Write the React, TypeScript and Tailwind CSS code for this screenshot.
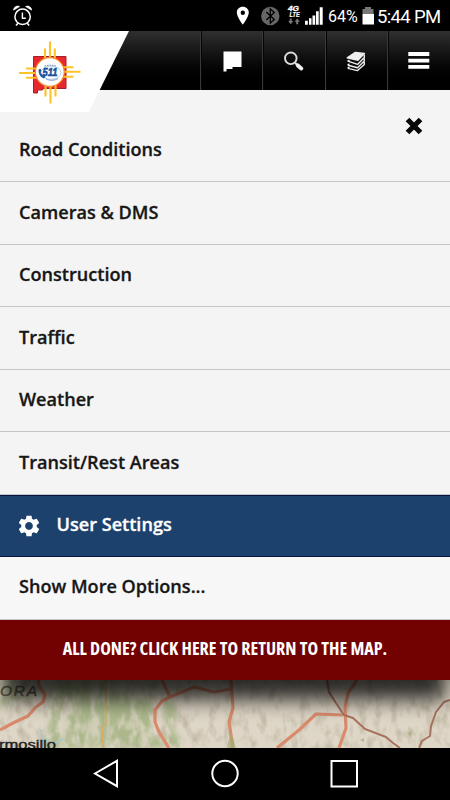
import React from "react";

const MENU_TOP = ["Cameras & DMS", "Construction", "Traffic", "Weather", "Transit/Rest Areas"];

function AlarmIcon() {
  return (
    <svg width="20" height="22" viewBox="0 0 20 22" fill="none" stroke="#fff">
      <circle cx="9.6" cy="11.8" r="7.7" strokeWidth="1.5" />
      <path d="M9.4 7.6v5.6h3.4" strokeWidth="1.4" />
      <path d="M5 18.3l-2 2.2M14.2 18.3l2 2.2" strokeWidth="1.6" />
      <path d="M.6 5.2C.4 2.4 4 0 6.6 1.6ZM18.6 5.2c.2-2.8-3.4-5.2-6-3.6Z" fill="#fff" strokeWidth=".6" />
    </svg>
  );
}

function StatusIcons() {
  return (
    <svg width="90" height="30" viewBox="235 0 90 30" fill="none">
      <path d="M242.8 6.8c-3.5 0-6 2.5-6 5.8 0 4.2 6 12.2 6 12.2s6-8 6-12.2c0-3.3-2.5-5.8-6-5.8Zm0 3.7a2.2 2.2 0 1 1 0 4.4 2.2 2.2 0 0 1 0-4.4Z" fill="#fff" fillRule="evenodd" />
      <circle cx="270.3" cy="16" r="9.2" fill="#666" />
      <path d="M266.3 12l8 7.5-4 3.5V9l4 3.5-8 7.5" stroke="#000" strokeWidth="1.3" />
      <text x="287.9" y="11" fill="#fff" fontFamily="Liberation Sans, sans-serif" fontSize="8" fontWeight="700" fontStyle="italic" stroke="#fff" strokeWidth=".3" textLength="11" lengthAdjust="spacingAndGlyphs">4G</text>
      <text x="289.6" y="17.4" fill="#fff" fontFamily="Liberation Sans, sans-serif" fontSize="6.5" fontWeight="700" fontStyle="italic" stroke="#fff" strokeWidth=".2" textLength="10" lengthAdjust="spacingAndGlyphs">LTE</text>
      <path d="M289.7 18.6h2v2.5h1.6l-2.6 3.2-2.6-3.2h1.6ZM296.2 24.3v-2.6h-1.6l2.6-3.2 2.6 3.2h-1.6v2.6Z" fill="#777" />
      <path d="M305 20.7h2.8v4H305zM309 18.3h2.5v6.4H309zM312.5 15.4h2.7v9.3h-2.7zM316 11.3h2.7v13.4H316zM319.7 7.2h3v17.5h-3z" fill="#fff" />
    </svg>
  );
}

function Logo() {
  return (
    <svg className="relative block" width="130" height="82" viewBox="0 30 130 82">
      <path d="M0 31H129L88.5 112.5H0Z" fill="#fff" />
      <path d="M33.5 56.5H66V88.5H43l-.5 1.5h-5v3h-4Z" fill="#e7282c" stroke="#a51f28" strokeWidth="1" />
      <path d="M50 41.5v20M45 48.5v12M54.8 48.5v12M50.5 85v18.5M45.5 85v11.5M55.5 85v11.5M19 73h18M26 68.5h12M26 77.8h12M62 71.8h18.5M62 67.3h11.5M62 76.8h11.5" stroke="#fdc42a" strokeWidth="2.1" />
      <circle cx="49.8" cy="72" r="14.4" fill="#fff" stroke="#f88a2c" strokeWidth="1.2" />
      <ellipse cx="51" cy="72.7" rx="10" ry="6.6" fill="none" stroke="#b8cbe0" strokeWidth="1" />
      <path d="M46 79c4 2 9 1.5 12-.4" fill="none" stroke="#7b9cc6" strokeWidth="1" />
      <path d="M44.5 66.2c4-1.4 8-1.4 12 0" fill="none" stroke="#4e7db5" strokeWidth=".9" strokeDasharray="1.5 1" />
      <path d="M38.6 69.5l1.8-.8 1 1.5-.7 1.8c.3 1.6 1 2.7 2.3 3.4l1.7-.2.6 2-1.5 1.2c-3.6-1.3-5.5-4.6-5.2-8.9Z" fill="#1b5aa6" />
      <text x="42.5" y="76" fill="#174f9c" fontFamily="Liberation Sans, sans-serif" fontSize="10" fontWeight="700" fontStyle="italic" stroke="#174f9c" strokeWidth=".5" textLength="15" lengthAdjust="spacingAndGlyphs">511</text>
    </svg>
  );
}

function NavCell({ children }: { children: React.ReactNode }) {
  return <div className="flex h-full w-[62.3px] border-l border-[#393939] shadow-[inset_1px_0_0_#050505]">{children}</div>;
}

function GearIcon() {
  return (
    <svg width="22" height="22" viewBox="1.8 1.8 20.4 20.4" fill="#fff">
      <path d="M19.14 12.94c.04-.3.06-.61.06-.94 0-.32-.02-.64-.07-.94l2.03-1.58c.18-.14.23-.41.12-.61l-1.92-3.32c-.12-.22-.37-.29-.59-.22l-2.39.96c-.5-.38-1.03-.7-1.62-.94l-.36-2.54c-.04-.24-.24-.41-.48-.41h-3.84c-.24 0-.43.17-.47.41l-.36 2.54c-.59.24-1.13.57-1.62.94l-2.39-.96c-.22-.08-.47 0-.59.22L2.74 8.87c-.12.21-.08.47.12.61l2.03 1.58c-.05.3-.09.63-.09.94s.02.64.07.94l-2.03 1.58c-.18.14-.23.41-.12.61l1.92 3.32c.12.22.37.29.59.22l2.39-.96c.5.38 1.03.7 1.62.94l.36 2.54c.05.24.24.41.48.41h3.84c.24 0 .44-.17.47-.41l.36-2.54c.59-.24 1.13-.56 1.62-.94l2.39.96c.22.08.47 0 .59-.22l1.92-3.32c.12-.22.07-.47-.12-.61l-2.01-1.58zM12 15.6c-1.98 0-3.6-1.62-3.6-3.6s1.62-3.6 3.6-3.6 3.6 1.62 3.6 3.6-1.62 3.6-3.6 3.6z" />
    </svg>
  );
}

function MapView() {
  return (
    <svg className="block" width="450" height="68" viewBox="0 680 450 68">
      <defs>
        <filter id="soft" x="-20%" y="-20%" width="140%" height="140%"><feGaussianBlur stdDeviation="5" /></filter>
        <filter id="forest" x="0" y="0" width="100%" height="100%" colorInterpolationFilters="sRGB">
          <feTurbulence type="fractalNoise" baseFrequency=".1 .05" numOctaves="4" seed="8" />
          <feColorMatrix values="0 0 0 0 .65  0 0 0 0 .71  0 0 0 0 .52  3.5 0 0 0 -1.2" />
          <feComposite in2="SourceGraphic" operator="in" />
        </filter>
        <filter id="relief" x="0" y="0" width="100%" height="100%" colorInterpolationFilters="sRGB">
          <feTurbulence type="fractalNoise" baseFrequency=".12 .07" numOctaves="3" seed="3" />
          <feColorMatrix values="0 0 0 0 .6  0 0 0 0 .56  0 0 0 0 .47  2.2 0 0 0 -1" />
        </filter>
        <filter id="edge" x="-10%" y="-10%" width="120%" height="120%"><feGaussianBlur stdDeviation="3" /></filter>
      </defs>
      <path d="M0 680h450v68H0z" fill="#ded6c6" />
      <path d="M0 680h450v68H0z" filter="url(#relief)" opacity=".45" />
      <path d="M70 680h82l-8 28 8 40H60Z" fill="#b4c095" opacity=".3" filter="url(#soft)" />
      <g filter="url(#forest)" opacity=".85">
        <path d="M50 680h110l-8 30 14 38H38l12-25ZM0 680h42l-16 22-26 8ZM163 695l15 12-5 25 18 16h-25Z" fill="#000" filter="url(#edge)" />
      </g>
      <path d="M106 680v44l-4 3 1 21" fill="none" stroke="#d8ac64" strokeWidth="1.4" />
      <g fill="none" stroke="#d98b6c" strokeWidth="3.2" strokeLinejoin="round">
        <path d="M38 680l1 6 6 9-2 7-7 5-8 9-15 7-13 7" />
        <path d="M162 680l8 17-8 4-7 9v12l4 10 10 16M170 697l24-10 20 5 17-3" />
        <path d="M231 680l2 28-4 14 4 26M277 748l22-18 17-16 27 1M339 748l7-20-1-20 3-15 9-13" />
      </g>
      <g fill="none" stroke="#a87360" strokeWidth="2" strokeLinejoin="round">
        <path d="M327 680l2 12 7 11 8 12 9 3 12 11 21 8 7 6 7 5" />
        <path d="M450 700l-6 2-8 10-5 14-1 10-8 5-3 7" />
      </g>
      <path d="M41 729v7l5 4 7 4 10-5M36 742l10-1" stroke="#a9c8c8" strokeWidth="1.5" fill="none" />
      <path d="M230 733l4 7 1 8h-8ZM407 733l5-2-1 6ZM360 740l4-2v4Z" fill="#a2ad77" opacity=".7" />
      <text x="-13" y="696" fill="#675d50" fontFamily="Liberation Sans, sans-serif" fontSize="15.5" fontStyle="italic" textLength="50" stroke="#675d50" strokeWidth=".5">NORA</text>
      <text x="-1" y="748.5" fill="#222" stroke="#222" strokeWidth=".4" fontFamily="Liberation Sans, sans-serif" fontSize="13" textLength="57" lengthAdjust="spacingAndGlyphs">rmosillo</text>
    </svg>
  );
}

export default function App() {
  return (
    <div className="flex h-[800px] w-[450px] flex-col overflow-hidden bg-black font-['Open_Sans',sans-serif]">
      <div className="flex h-[31px] shrink-0 items-start text-white">
        <div className="ml-[13px] mt-[5px] w-[222px]"><AlarmIcon /></div>
        <StatusIcons />
        <span className="ml-[3px] mt-[6px] w-[34px] whitespace-nowrap font-[Roboto,sans-serif] text-[16px] leading-[22px]">64%</span>
        <svg className="mt-[7px]" width="13" height="18"><path d="M3 0h6v2h2.5v5H.5V2H3Z" fill="#777" /><path d="M.5 7h11.5v10.5H.5z" fill="#fff" /></svg>
        <span className="ml-[2px] mt-[6px] whitespace-nowrap font-[Roboto,sans-serif] text-[18.5px] leading-[22px] tracking-[-0.65px]">5:44 PM</span>
      </div>

      <header className="flex h-[59px] shrink-0 bg-linear-to-b from-[#303030] to-black">
        <div className="relative z-10 -mt-px h-[82px] w-[200px]"><Logo /></div>
        <NavCell>
          <svg width="61" height="59" viewBox="0 0 61 59"><path d="M22.5 20.5h18v15.5h-9v2h-6v2.5h-3Z" fill="#fff" /></svg>
        </NavCell>
        <NavCell>
          <svg width="61" height="59" viewBox="0 0 61 59" fill="none"><circle cx="27.8" cy="27.3" r="5.8" stroke="#ddd" strokeWidth="1.9" /><path d="M32 31.8l2.5 2.5" stroke="#ddd" strokeWidth="2" /><path d="M34.8 34.4l3.5 3" stroke="#eee" strokeWidth="4" strokeLinecap="round" /></svg>
        </NavCell>
        <NavCell>
          <svg width="61" height="59" viewBox="0 0 61 59" fill="none" stroke="#eee" strokeWidth="1.4" strokeLinejoin="round">
            <path d="M21.2 26.8l8.2-5.4 9 1-6.5 6.8Z" fill="#eee" />
            <path d="M22 30.2l9.5 3.2 6.8-6.9v-3M21.5 30.4l2-1.4M22 34.2l9.5 2.6 6.8-6.8v-2.5M21.5 34.3l2-1.6M22 37.4l9.5 2.2 6.8-6.2v-2.5M21.5 37.4l2-1.4" />
          </svg>
        </NavCell>
        <NavCell>
          <svg width="61" height="59" viewBox="0 0 61 59" fill="#fff"><path d="M20.3 21h21v4h-21zM20.3 27.7h21v3.8h-21zM20.3 34h21v3.8h-21z" /></svg>
        </NavCell>
      </header>

      <nav className="flex shrink-0 flex-col bg-[#f4f4f4] text-[18.1px] font-semibold text-[#171717] [-webkit-text-stroke:0.3px_currentColor]">
        <div className="flex h-[92px] items-start justify-between border-b border-[#c6c6c6] pl-[19px] pr-[26px]">
          <span className="mt-[47px] leading-[25px]">Road Conditions</span>
          <svg className="mt-[26px]" width="20" height="20" viewBox="0 0 20 20"><path d="M3.5 3.5l13 13M16.5 3.5l-13 13" stroke="#080808" strokeWidth="5.2" /></svg>
        </div>
        {MENU_TOP.map((label) => (
          <div key={label} className="flex h-[62.5px] items-center border-b border-[#c6c6c6] pl-[19px] pb-px">{label}</div>
        ))}
        <div className="flex h-[62.5px] items-center border-y border-[#06133e] bg-[#1c416c] pl-[18px] text-white">
          <GearIcon />
          <span className="ml-[16.5px] pb-[2px]">User Settings</span>
        </div>
        <div className="flex h-[63px] items-center border-b border-[#c6c6c6] bg-[#f7f7f7] pb-[2px] pl-[19px]">Show More Options...</div>
      </nav>

      <div className="relative z-10 flex h-[60px] shrink-0 items-center justify-center bg-[#720202] pb-[4px] text-[18px] font-bold text-white shadow-[0_24px_20px_-4px_rgba(0,0,0,0.8)]">
        <span className="whitespace-nowrap [font-stretch:75%]">ALL DONE? CLICK HERE TO RETURN TO THE MAP.</span>
      </div>

      <div className="h-[68px] shrink-0"><MapView /></div>

      <div className="relative z-20 flex h-[52px] shrink-0 items-center bg-black">
        <svg width="450" height="52" viewBox="0 748 450 52" fill="none" stroke="#fff" strokeWidth="2">
          <path d="M95 773.5l22-12.7v25.4Z" />
          <circle cx="225" cy="773.5" r="12.7" />
          <path d="M331.5 761h25.5v25.5h-25.5z" />
        </svg>
      </div>
    </div>
  );
}
